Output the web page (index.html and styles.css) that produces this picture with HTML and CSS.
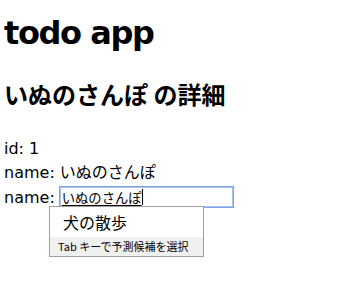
FILE: index.html
```html
<!DOCTYPE html>
<html lang="ja">
<head>
    <meta charset="UTF-8">
    <title>todo app</title>
    <link rel="stylesheet" href="styles.css">
</head>
<body>
    <h1>todo app</h1>
    <h2>いぬのさんぽ の詳細</h2>

    <div class="detail">
        <div class="row">id: 1</div>
        <div class="row">name: いぬのさんぽ</div>
        <div class="row edit-row">
            <label class="label">name:</label>
            <div class="name-input">
                <span class="composing">いぬのさんぽ</span><span class="caret"></span>
            </div>
        </div>
        <div class="suggest">
            <div class="suggest-item">犬の散歩</div>
            <div class="suggest-hint">Tab キーで予測候補を選択</div>
        </div>
    </div>
</body>
</html>
```

FILE: styles.css
```css
html, body {
    min-height: 100vh;
}
body {
    font-family: "DejaVu Sans", "Noto Sans CJK JP", sans-serif;
    color: #000;
    margin: 0;
    padding: 0 4px;
    box-sizing: border-box;
    background-color: #fff;
}
h1 {
    font-size: 32px;
    line-height: 40px;
    margin: 0;
    padding-top: 13px;
    letter-spacing: -1.4px;
}
h2 {
    font-size: 24px;
    line-height: 32px;
    margin: 25px 0 0;
    font-family: "Noto Sans CJK JP", sans-serif;
}
.detail {
    position: relative;
    margin-top: 27px;
    font-size: 16px;
}
.row {
    height: 24px;
    line-height: 24px;
    white-space: nowrap;
}
.edit-row {
    display: flex;
    align-items: flex-start;
    gap: 4px;
}
.label {
    display: block;
    line-height: 24px;
    padding-top: 1px;
}
.name-input {
    box-sizing: border-box;
    margin-top: 1px;
    width: 175px;
    height: 22px;
    border: 1px solid #7da2e4;
    box-shadow: inset 0 0 0 1px #a9c2ef;
    padding: 0 2px;
    font-family: "Noto Sans CJK JP", sans-serif;
    font-size: 13.3px;
    line-height: 19px;
    display: flex;
    align-items: center;
}
.composing {
    text-decoration: underline;
    text-underline-offset: 2px;
}
.caret {
    display: inline-block;
    width: 1px;
    height: 16px;
    background-color: #000;
}
.suggest {
    position: absolute;
    left: 45px;
    top: 69px;
    width: 155px;
    box-sizing: border-box;
    border: 1px solid #a0a0a0;
    background-color: #fff;
    font-family: "Noto Sans CJK JP", sans-serif;
}
.suggest-item {
    height: 30px;
    line-height: 30px;
    padding-left: 13px;
    font-size: 16px;
}
.suggest-hint {
    height: 19px;
    line-height: 19px;
    padding-left: 8px;
    font-size: 11px;
    background-color: #f0f0f0;
}
```
